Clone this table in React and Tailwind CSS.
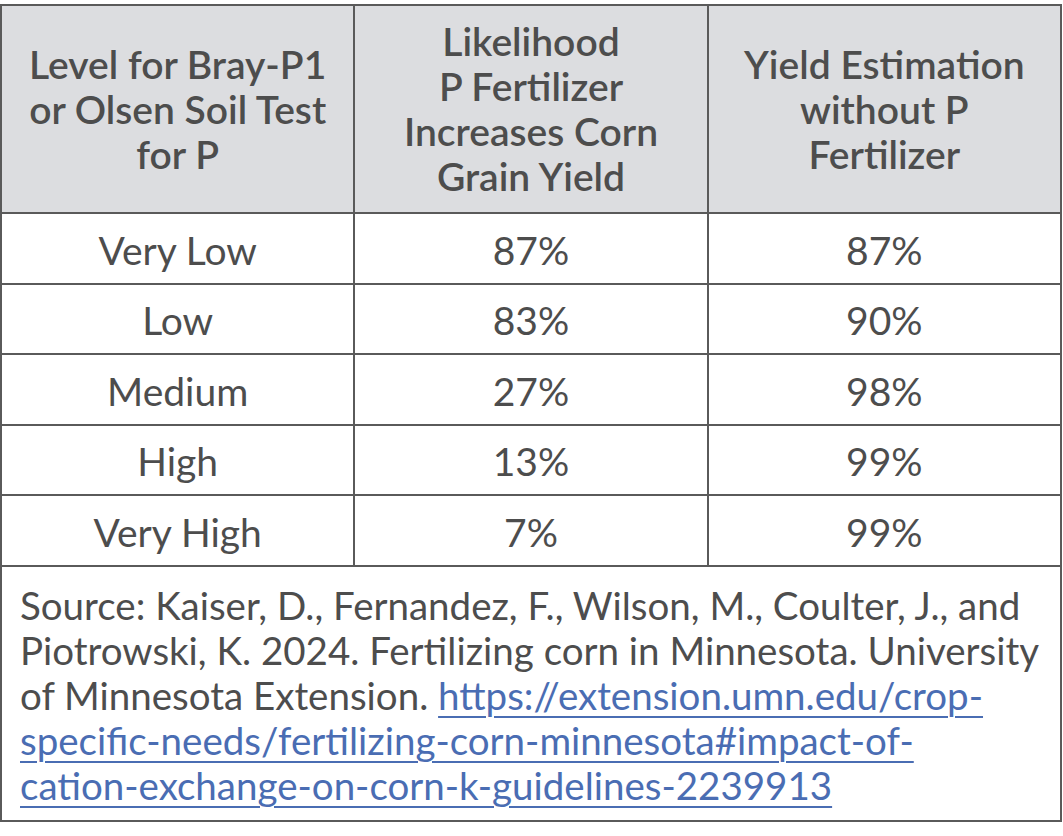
export default function App() {
  const rows = [
    ['Very Low', '87%', '87%'],
    ['Low', '83%', '90%'],
    ['Medium', '27%', '98%'],
    ['High', '13%', '99%'],
    ['Very High', '7%', '99%'],
  ];

  return (
    <div className="bg-white pt-[4px] w-[1063px]" style={{ fontFamily: 'Lato, "Noto Sans", sans-serif' }}>
      <table className="w-[1062px] table-fixed border-collapse text-[#4d4d4d] text-[39px] leading-[45px]">
        <thead>
          <tr className="bg-[#dcdde0] h-[208px]">
            <th className="border-2 border-[#5a5a5a] font-semibold px-2 align-middle">
              Level for Bray-P1<br />or Olsen Soil Test<br />for P
            </th>
            <th className="border-2 border-[#5a5a5a] font-semibold px-2 align-middle">
              Likelihood<br />P Fertilizer<br />Increases Corn<br />Grain Yield
            </th>
            <th className="border-2 border-[#5a5a5a] font-semibold px-2 align-middle">
              Yield Estimation<br />without P<br />Fertilizer
            </th>
          </tr>
        </thead>
        <tbody>
          {rows.map((r) => (
            <tr key={r[0]} className="h-[70.5px]">
              {r.map((c, i) => (
                <td key={i} className="border-2 border-[#5a5a5a] text-center align-middle pt-[4px]">
                  {c}
                </td>
              ))}
            </tr>
          ))}
          <tr>
            <td colSpan={3} className="border-2 border-[#5a5a5a] pl-[18px] pr-[4px] pt-[16px] pb-[12px] whitespace-nowrap text-[38.5px]">
              Source: Kaiser, D., Fernandez, F., Wilson, M., Coulter, J., and<br />
              Piotrowski, K. 2024. Fertilizing corn in Minnesota. University<br />
              of Minnesota Extension.{' '}
              <a
                href="#"
                className="text-[#4a6db3] underline underline-offset-[6px] decoration-[2px]"
              >
                https://extension.umn.edu/crop-<br />
                specific-needs/fertilizing-corn-minnesota#impact-of-<br />
                cation-exchange-on-corn-k-guidelines-2239913
              </a>
            </td>
          </tr>
        </tbody>
      </table>
    </div>
  );
}
